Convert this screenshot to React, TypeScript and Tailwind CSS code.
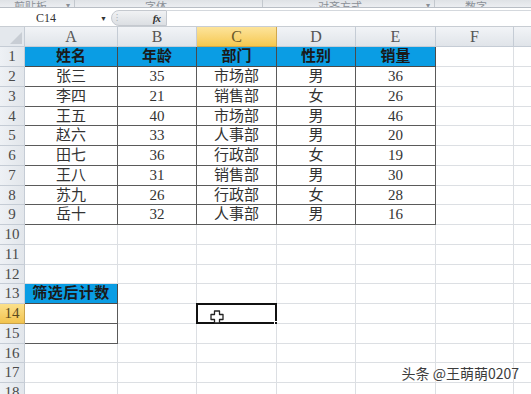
import React from "react";

const serif = { fontFamily: '"Liberation Serif", "Noto Sans CJK SC", serif' };
const cjk = { fontFamily: '"Liberation Serif", "Noto Sans CJK SC", serif' };

const widths = ["w-[93px]", "w-[79px]", "w-[80px]", "w-[79px]", "w-[80px]", "w-[78px]"];
const letters = ["A", "B", "C", "D", "E", "F"];

const data: string[][] = [
  ["张三", "35", "市场部", "男", "36"],
  ["李四", "21", "销售部", "女", "26"],
  ["王五", "40", "市场部", "男", "46"],
  ["赵六", "33", "人事部", "男", "20"],
  ["田七", "36", "行政部", "女", "19"],
  ["王八", "31", "销售部", "男", "30"],
  ["苏九", "26", "行政部", "女", "28"],
  ["岳十", "32", "人事部", "男", "16"],
];

function RowHeader({ n }: { n: number }) {
  const active = n === 14;
  return (
    <div
      className={`w-[25px] shrink-0 flex items-center justify-center border-r border-b text-[15px] ${
        active
          ? "bg-gradient-to-b from-[#fbe08a] to-[#f2c44e] border-[#c9a24a] text-[#5a4a20]"
          : "bg-gradient-to-r from-[#eef1f5] to-[#e2e6eb] border-[#c5ccd5] text-[#4a4a4a]"
      }`}
      style={serif}
    >
      {n}
    </div>
  );
}

function Cursor() {
  return (
    <svg className="absolute left-[13px] top-[6px]" width="14" height="14" viewBox="0 0 14 14">
      <path
        d="M4.5 1 H9.5 V4.5 H13 V9.5 H9.5 V13 H4.5 V9.5 H1 V4.5 H4.5 Z"
        fill="#fff"
        stroke="#222"
        strokeWidth="1.3"
        strokeLinejoin="round"
      />
    </svg>
  );
}

function Row({ n }: { n: number }) {
  const cells = [];
  for (let c = 0; c < 6; c++) {
    let content: React.ReactNode = null;
    let cls = "border-r border-b border-[#dcdfe3] bg-white";
    let textCls = "text-[#333] text-[15px]";
    if (n === 1 && c < 5) {
      content = ["姓名", "年龄", "部门", "性别", "销量"][c];
      cls = "border-r border-b border-[#4a4a4a] bg-[#0a9de4]";
      textCls = "text-[#1a1a1a] text-[15px] font-bold";
    } else if (n >= 2 && n <= 9 && c < 5) {
      content = data[n - 2][c];
      cls = "border-r border-b border-[#5a5a5a] bg-white";
    } else if (n === 13 && c === 0) {
      content = "筛选后计数";
      cls = "border-r border-b border-[#4a4a4a] bg-[#0a9de4]";
      textCls = "text-[#1a1a1a] text-[15px] font-bold tracking-[0.5px]";
    } else if ((n === 14 || n === 15) && c === 0) {
      cls = "border-r border-b border-[#5a5a5a] bg-white";
    }
    cells.push(
      <div
        key={c}
        className={`${widths[c]} shrink-0 relative flex items-center justify-center ${cls} ${textCls}`}
        style={cjk}
      >
        {content}
        {n === 14 && c === 2 && (
          <>
            <div className="absolute -inset-px border-2 border-[#111]" />
            <div className="absolute -right-[3px] -bottom-[3px] w-[5px] h-[5px] bg-[#111] border border-white" />
            <Cursor />
          </>
        )}
      </div>
    );
  }
  return (
    <div className={`flex ${n === 1 ? "h-[20px]" : "h-[19.75px]"}`}>
      <RowHeader n={n} />
      {cells}
      <div className="flex-1 border-b border-[#dcdfe3] bg-white" />
    </div>
  );
}

function RibbonGroup({ w, label, pad, arrow }: { w: string; label: string; pad: string; arrow?: boolean }) {
  return (
    <div className={`${w} shrink-0 h-full border-r border-[#c3c8ce] flex items-end justify-between overflow-hidden ${pad} pr-[4px]`}>
      <span className="leading-[14px] -mb-[6px]">{label}</span>
      {arrow && <span className="text-[8px] leading-[8px] -mb-[2px]">▾</span>}
    </div>
  );
}

export default function App() {
  const rows = Array.from({ length: 18 }, (_, i) => i + 1);
  return (
    <div className="w-[531px] h-[394px] overflow-hidden bg-white relative select-none">
      {/* ribbon bottom strip */}
      <div
        className="h-[8px] bg-gradient-to-b from-[#dfe2e6] to-[#eceef1] border-b border-[#b9bec5] overflow-hidden flex text-[11px] text-[#8a8f96]"
        style={{ fontFamily: '"Noto Sans CJK SC", sans-serif' }}
      >
        <RibbonGroup w="w-[75px]" label="剪贴板" pad="pl-[14px]" arrow />
        <RibbonGroup w="w-[188px]" label="字体" pad="pl-[70px]" />
        <RibbonGroup w="w-[172px]" label="对齐方式" pad="pl-[55px]" arrow />
        <div className="flex-1 h-full flex items-end overflow-hidden pl-[30px]">
          <span className="leading-[14px] -mb-[6px]">数字</span>
        </div>
      </div>
      {/* formula bar */}
      <div className="h-[19px] flex items-center bg-white border-b border-[#c8cdd3] pt-[2px]">
        <div className="w-[111px] h-[16px] flex items-center justify-between pl-[36px] pr-[4px]">
          <span className="text-[12px] leading-none text-[#333]" style={serif}>C14</span>
          <span className="text-[7px] leading-none text-[#333]">▼</span>
        </div>
        <div className="w-[56px] h-[16px] rounded-l-full bg-gradient-to-b from-[#f1f2f4] to-[#dcdfe3] border border-[#c5c9cf] flex items-center justify-between pl-[4px] pr-[6px]">
          <span className="text-[8px] leading-none text-[#9aa0a6]">⁝</span>
          <span className="text-[11px] italic font-bold text-[#333] leading-none tracking-[-1px]" style={serif}>
            fx
          </span>
        </div>
        <div className="flex-1 h-[16px] border-t border-[#d4d8dd] bg-white" />
      </div>
      {/* column headers */}
      <div className="flex h-[20px]">
        <div className="w-[25px] shrink-0 border-r border-b border-[#c5ccd5] bg-[#e4e8ed] flex items-end justify-end p-[2px]">
          <svg width="12" height="12" viewBox="0 0 12 12">
            <path d="M12 0 L12 12 L0 12 Z" fill="#c8cdd4" />
          </svg>
        </div>
        {letters.map((l, i) => (
          <div
            key={l}
            className={`${widths[i]} shrink-0 flex items-center justify-center border-r border-b text-[16px] ${
              i === 2
                ? "bg-gradient-to-b from-[#fde49a] to-[#f5c84e] border-[#d2a84c] text-[#6b5a2a]"
                : "bg-gradient-to-b from-[#f2f4f7] to-[#e0e4e9] border-[#c5ccd5] text-[#555]"
            }`}
            style={serif}
          >
            {l}
          </div>
        ))}
        <div className="flex-1 border-b border-[#c5ccd5] bg-gradient-to-b from-[#f2f4f7] to-[#e0e4e9]" />
      </div>
      {rows.map((n) => (
        <Row key={n} n={n} />
      ))}
      {/* watermark */}
      <div
        className="absolute right-[12px] bottom-[10px] text-[14px] text-[#3c3c3c]"
        style={{
          fontFamily: '"Noto Sans CJK SC", sans-serif',
          textShadow: "0 0 2px #fff, 0 0 2px #fff, 1px 1px 1px #fff",
        }}
      >
        头条 @王萌萌0207
      </div>
    </div>
  );
}
